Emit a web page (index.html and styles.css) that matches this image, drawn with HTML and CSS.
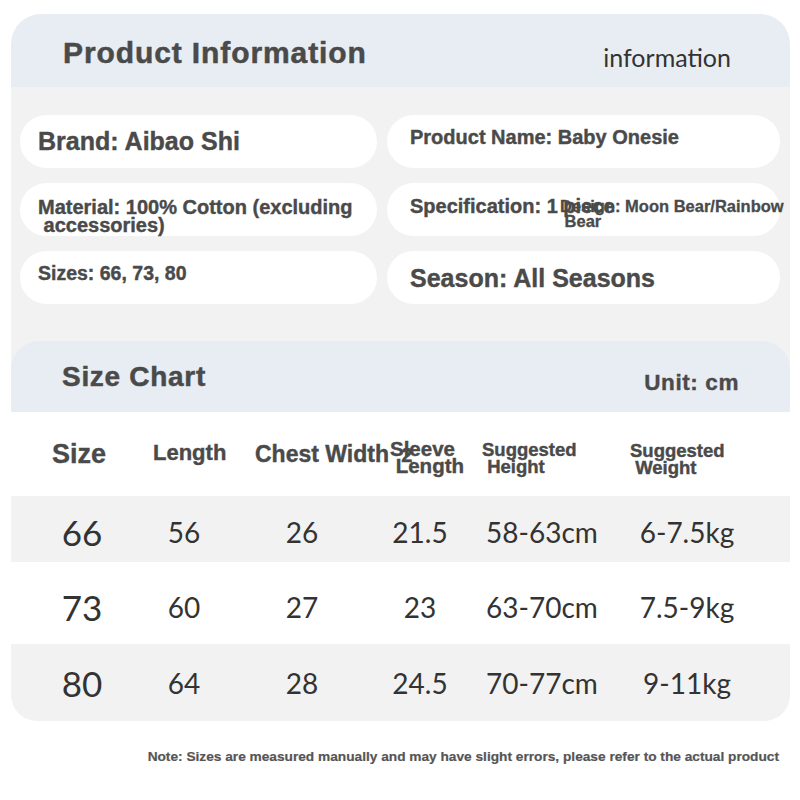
FILE: index.html
```html
<!DOCTYPE html>
<html>
<head>
<meta charset="utf-8">
<link rel="stylesheet" href="styles.css">
</head>
<body>
<div class="card">
  <div class="band top-band">
    <h1 class="title">Product Information</h1>
    <span class="info">information</span>
  </div>
  <div class="pills">
    <div class="pill pill-left brand">Brand: Aibao Shi</div>
    <div class="pill pill-right pname">Product Name: Baby Onesie</div>
    <div class="pill pill-left material">Material: 100% Cotton (excluding<br>&nbsp;accessories)</div>
    <div class="pill pill-right spec">Specification: 1 piece<span class="design">Design: Moon Bear/Rainbow<br>&nbsp;Bear</span></div>
    <div class="pill pill-left sizes">Sizes: 66, 73, 80</div>
    <div class="pill pill-right season">Season: All Seasons</div>
  </div>
  <div class="band chart-band">
    <h2 class="chart-title">Size Chart</h2>
    <span class="unit">Unit: cm</span>
  </div>
</div>
<div class="table">
  <div class="thead">
    <div class="th th-size">Size</div>
    <div class="th th-length">Length</div>
    <div class="th th-chest">Chest Width <span class="two">2</span></div>
    <div class="th th-sleeve">Sleeve<br>&nbsp;Length</div>
    <div class="th th-height">Suggested<br>&nbsp;Height</div>
    <div class="th th-weight">Suggested<br>&nbsp;Weight</div>
  </div>
  <div class="row row-grey row-1">
    <div class="td td-size">66</div><div class="td">56</div><div class="td">26</div><div class="td">21.5</div><div class="td">58-63cm</div><div class="td">6-7.5kg</div>
  </div>
  <div class="row row-white row-2">
    <div class="td td-size">73</div><div class="td">60</div><div class="td">27</div><div class="td">23</div><div class="td">63-70cm</div><div class="td">7.5-9kg</div>
  </div>
  <div class="row row-grey row-3">
    <div class="td td-size">80</div><div class="td">64</div><div class="td">28</div><div class="td">24.5</div><div class="td">70-77cm</div><div class="td">9-11kg</div>
  </div>
</div>
<p class="note">Note: Sizes are measured manually and may have slight errors, please refer to the actual product</p>
</body>
</html>
```
FILE: styles.css
```css
html, body {
  margin: 0;
  padding: 0;
  background: #ffffff;
}
body {
  width: 800px;
  font-family: "Liberation Sans", Arial, sans-serif;
  color: #4a4a4a;
}
.card {
  margin: 14px 0 0 11px;
  width: 779px;
  background: #f2f2f2;
  border-radius: 30px 30px 0 0;
  overflow: hidden;
}
.band {
  background: #e8edf4;
  display: flex;
  justify-content: space-between;
  align-items: center;
}
.top-band {
  height: 73px;
  padding: 0 59px 0 52px;
  border-radius: 30px 30px 0 0;
}
.title {
  margin: 0;
  font-size: 30px;
  font-weight: bold;
  letter-spacing: 0.9px;
  color: #4a4a4a;
  padding-top: 4px;
  -webkit-text-stroke: 0.5px #4a4a4a;
}
.info {
  font-family: "Lato", "Liberation Sans", sans-serif;
  font-weight: 400;
  font-size: 25px;
  color: #333333;
  padding-top: 12px;
}
.pills {
  display: grid;
  grid-template-columns: 357px 393px;
  grid-auto-rows: 53px;
  column-gap: 10px;
  row-gap: 15px;
  padding: 28px 10px 37px 9px;
}
.pill {
  position: relative;
  background: #ffffff;
  border-radius: 27px;
  display: flex;
  align-items: center;
  font-weight: bold;
  white-space: nowrap;
  -webkit-text-stroke: 0.4px #4a4a4a;
}
.pill-left { padding-left: 18px; }
.pill-right { padding-left: 23px; }
.brand { font-size: 25px; }
.pname { font-size: 20px; padding-bottom: 8px; }
.material { font-size: 20px; line-height: 18px; padding-top: 12px; }
.spec { font-size: 20px; padding-bottom: 6px; }
.design {
  position: absolute;
  left: 173px;
  top: 16px;
  font-size: 16.5px;
  line-height: 15px;
  color: #4a4a4a;
  -webkit-text-stroke: 0.3px #4a4a4a;
}
.sizes { font-size: 19.5px; padding-bottom: 8px; }
.season { font-size: 25px; padding-top: 2px; }
.chart-band {
  height: 71px;
  padding: 0 51px 0 51px;
  border-radius: 28px 28px 0 0;
}
.chart-title {
  margin: 0;
  font-size: 28px;
  font-weight: bold;
  letter-spacing: 0.7px;
  color: #4a4a4a;
  padding-top: 1px;
  -webkit-text-stroke: 0.5px #4a4a4a;
}
.unit {
  font-size: 22.5px;
  font-weight: bold;
  letter-spacing: 0.6px;
  padding-top: 12px;
  -webkit-text-stroke: 0.4px #4a4a4a;
}
.table {
  margin-left: 11px;
  width: 779px;
}
.thead {
  height: 84px;
  display: grid;
  grid-template-columns: 41px 101px 102px 135px 92px 148px 160px;
  align-items: center;
  background: #ffffff;
}
.th {
  font-weight: bold;
  white-space: nowrap;
  line-height: 17px;
  -webkit-text-stroke: 0.4px #4a4a4a;
}
.th-size { grid-column: 2; font-size: 27px; padding-top: 0; }
.th-length { font-size: 22px; padding-bottom: 4px; }
.th-chest { font-size: 23px; padding-top: 2px; }
.two { font-size: 20px; margin-left: 6px; }
.th-sleeve { font-size: 20.5px; padding-top: 6px; }
.th-height { font-size: 18.5px; padding-top: 8px; }
.th-weight { font-size: 18.5px; padding-top: 10px; }
.row {
  display: grid;
  grid-template-columns: 142px 62px 174px 62px 182px 108px 49px;
  align-items: center;
  font-family: "Lato", "Liberation Sans", sans-serif;
  color: #333333;
  font-size: 28px;
}
.td {
  text-align: center;
  white-space: nowrap;
}
.td-size { font-size: 35px; }
.row-grey { background: #f2f2f2; }
.row-white { background: #ffffff; }
.row-1 { height: 66px; padding-top: 6px; box-sizing: border-box; }
.row-2 { height: 82px; padding-top: 8px; box-sizing: border-box; }
.row-3 { height: 77px; border-radius: 0 0 26px 26px; }
.note {
  margin: 28px 21px 0 0;
  text-align: right;
  font-size: 13.7px;
  font-weight: bold;
  color: #555555;
  -webkit-text-stroke: 0.2px #555555;
}
```
